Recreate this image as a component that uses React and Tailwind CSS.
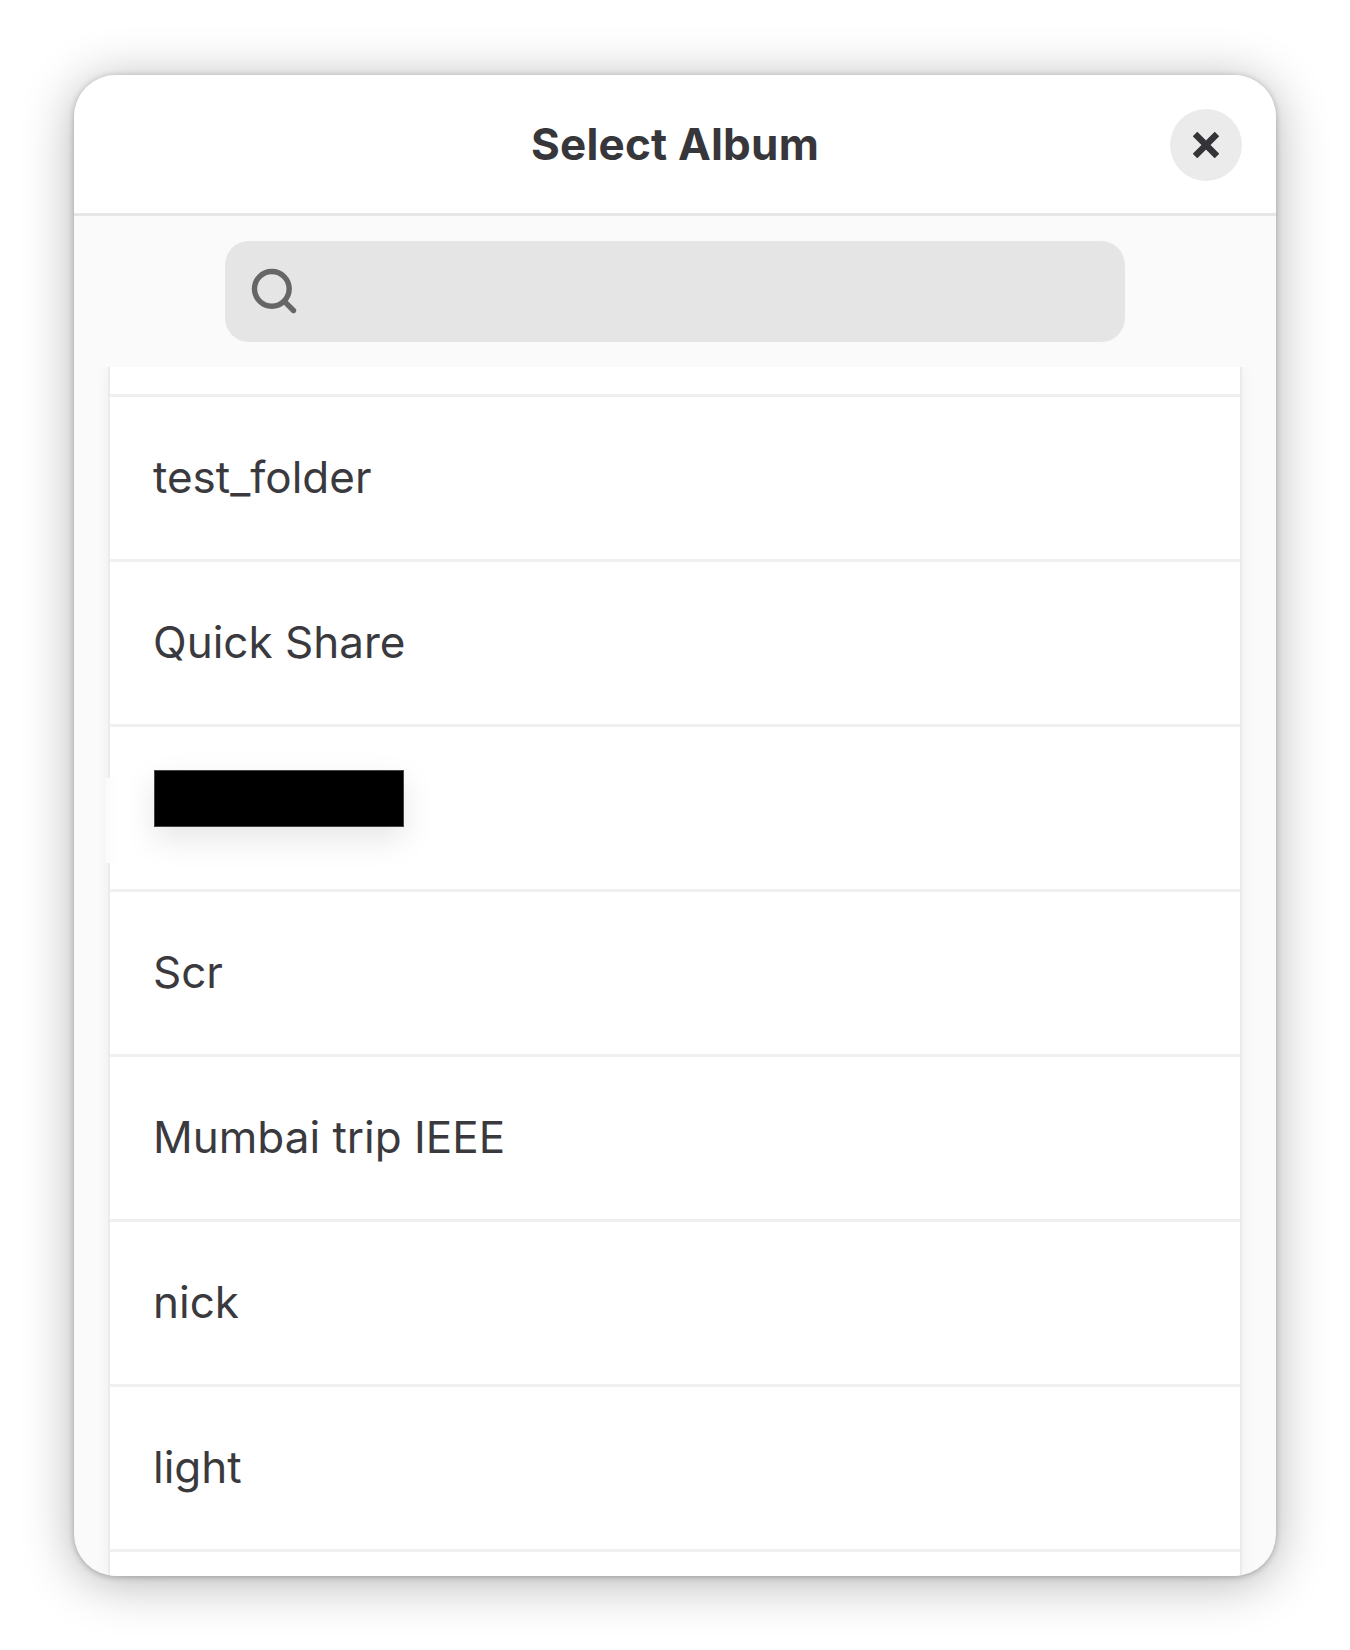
import React from 'react'
import { Search } from 'lucide-react'

const ALBUMS = ['test_folder', 'Quick Share', null, 'Scr', 'Mumbai trip IEEE', 'nick', 'light']

function AlbumRow({ name }) {
  return (
    <div className="flex h-[165px] shrink-0 items-center border-b-[3px] border-[#f0f0f0] bg-white pl-[43px] pb-[2px]">
      {name ? (
        <span className="text-[44px] leading-[60px] text-[#3a3a3e]">{name}</span>
      ) : (
        <span className="ml-[1px] mb-[17px] h-[57px] w-[250px] border border-[#444444] bg-black shadow-[0_12px_32px_rgba(0,0,0,0.1)]" />
      )}
    </div>
  )
}

export default function App() {
  return (
    <div className="h-[1650px] w-[1350px] bg-white pl-[74px] pt-[75px] font-['Inter',sans-serif]">
      <div className="relative flex h-[1501px] w-[1202px] flex-col overflow-hidden rounded-[42px] bg-[#fafafa] shadow-[0_1px_6px_rgba(0,0,0,0.26),0_6px_52px_rgba(0,0,0,0.3)]">
        <header className="relative z-10 flex h-[141px] shrink-0 items-center justify-center border-b-[3px] border-[#e6e6e6] bg-white">
          <h1 className="text-[44px] font-bold tracking-[0.2px] text-[#37373b]">Select Album</h1>
          <button className="absolute right-[34px] top-[34px] flex h-[72px] w-[72px] items-center justify-center rounded-full bg-[#ebebeb]">
            <svg width="26" height="26" viewBox="0 0 26 26" fill="none" stroke="#333338" strokeWidth="6.5">
              <path d="M2 2 L24 24 M24 2 L2 24" />
            </svg>
          </button>
        </header>
        <div className="relative z-10 flex h-[151px] shrink-0 justify-center bg-[#fafafa] pt-[25px]">
          <div className="flex h-[101px] w-[900px] items-center rounded-[24px] bg-[#e5e5e5] pb-[2px] pl-[23px]">
            <Search size={52} color="#666666" strokeWidth={2.5} />
          </div>
        </div>
        <div className="mx-[34px] flex min-h-0 flex-1 flex-col overflow-hidden border-x-[2px] border-[#ebebeb] shadow-[0_0_14px_rgba(0,0,0,0.05)]">
          <div className="h-[30px] shrink-0 border-b-[3px] border-[#f0f0f0] bg-white" />
          {ALBUMS.map((name, i) => (
            <AlbumRow key={i} name={name} />
          ))}
          <div className="flex-1 bg-white" />
        </div>
        {/* faint patch the redaction left over the list's edge */}
        <div className="absolute left-[31px] top-[703px] h-[85px] w-[12px] bg-gradient-to-r from-[#fafafa] to-white" />
      </div>
    </div>
  )
}
